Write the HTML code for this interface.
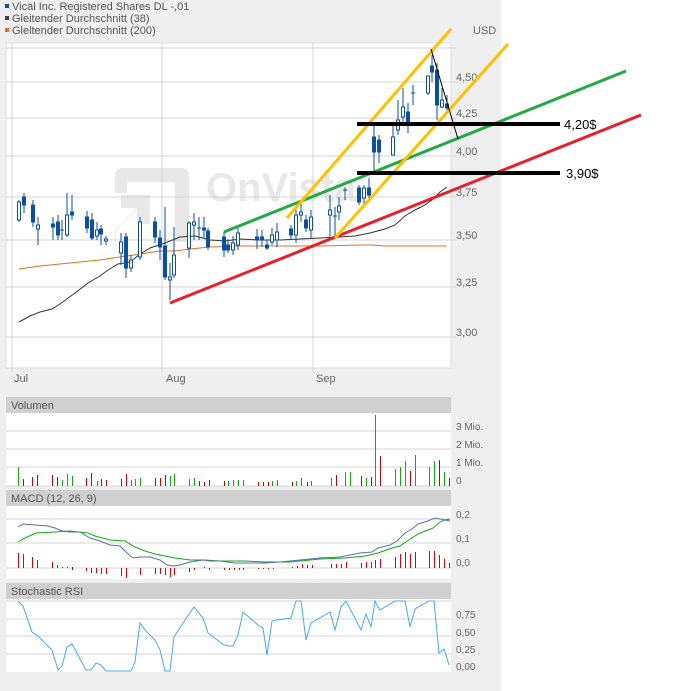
<!DOCTYPE html>
<html><head><meta charset="utf-8"><style>
html,body{margin:0;padding:0;background:#fff;}
svg{display:block;font-family:"Liberation Sans",sans-serif;}
</style></head><body>
<svg width="674" height="691" viewBox="0 0 674 691" xmlns="http://www.w3.org/2000/svg">
<rect x="0" y="0" width="501" height="691" fill="#efefef"/>
<!-- legend -->
<rect x="5" y="4" width="4" height="4" fill="#0b4fa3"/><text x="12" y="10" font-size="11" fill="#555">Vical Inc. Registered Shares DL -,01</text>
<rect x="5" y="16" width="4" height="4" fill="#444"/><text x="12" y="22" font-size="11" fill="#555">Gleitender Durchschnitt (38)</text>
<rect x="5" y="28" width="4" height="4" fill="#e07020"/><text x="12" y="34" font-size="11" fill="#555">Gleitender Durchschnitt (200)</text>
<text x="473" y="34" font-size="11" fill="#666">USD</text>
<!-- main plot -->
<rect x="6" y="43" width="445" height="325" fill="#fff" stroke="#ddd"/>
<!-- watermark -->
<g fill="#e8e8e8">
<path d="M122 168h60a7 7 0 0 1 7 7v67h-14v-60h-48v11h-12v-18a7 7 0 0 1 7-7z"/>
<path d="M115 242v-12l22-22h-16v-13h29v29h-13v-15l-21 21v12z"/>
</g>
<text x="206" y="201" font-size="40" font-weight="bold" fill="#e8e8e8">OnVista</text>
<g stroke="#d4d4d4" stroke-width="1">
<line x1="6" y1="48" x2="456" y2="48"/>
<line x1="6" y1="82" x2="456" y2="82"/><line x1="6" y1="118" x2="456" y2="118"/><line x1="6" y1="156" x2="456" y2="156"/><line x1="6" y1="197" x2="456" y2="197"/><line x1="6" y1="240" x2="456" y2="240"/><line x1="6" y1="287" x2="456" y2="287"/><line x1="6" y1="337" x2="456" y2="337"/>
<line x1="12" y1="43" x2="12" y2="372"/><line x1="162" y1="43" x2="162" y2="372"/><line x1="313" y1="43" x2="313" y2="372"/>
</g>
<g font-size="11" fill="#666">
<text x="456" y="81">4,50</text><text x="456" y="117">4,25</text><text x="456" y="155">4,00</text><text x="456" y="196">3,75</text><text x="456" y="239">3,50</text><text x="456" y="286">3,25</text><text x="456" y="336">3,00</text>
<text x="14" y="382">Jul</text><text x="166" y="382">Aug</text><text x="316" y="382">Sep</text>
</g>
<!-- MAs -->
<polyline fill="none" stroke="#e07020" stroke-width="1" points="19,269 40,266 60,264 80,262 100,260 120,257 140,254 160,251 175,251 190,249 210,247 240,246 280,246 320,246 360,245 372,245 385,246 420,246 447,246"/>
<polyline fill="none" stroke="#333" stroke-width="1" points="19,322 30,316 40,312 52,309 60,304 75,293 88,283 100,276 108,270 118,264 130,262 140,254 150,248 165,243 180,237 195,236 210,240 225,241 240,239 260,240 280,240 300,239 320,238 340,237 355,236 370,233 385,229 395,225 405,216 415,210 425,205 432,200 440,192 447,187"/>
<!-- candles -->
<g stroke="#0b4fa3" stroke-width="1">
<line x1="19" y1="200" x2="19" y2="222"/><rect x="17.5" y="202" width="3" height="18" fill="#fff"/>
<line x1="24" y1="193" x2="24" y2="213"/><rect x="22.5" y="197" width="3" height="8" fill="#0b4fa3"/>
<line x1="33" y1="200" x2="33" y2="227"/><rect x="31.5" y="205" width="3" height="17" fill="#0b4fa3"/>
<line x1="38" y1="217" x2="38" y2="245"/><rect x="36.5" y="225" width="3" height="4" fill="#fff"/>
<line x1="53" y1="217" x2="53" y2="240"/><rect x="51.5" y="224" width="3" height="3" fill="#0b4fa3"/>
<line x1="58" y1="215" x2="58" y2="240"/><rect x="56.5" y="222" width="3" height="13" fill="#0b4fa3"/>
<line x1="62" y1="220" x2="62" y2="240"/><line x1="60" y1="230" x2="64" y2="230"/>
<line x1="67" y1="193" x2="67" y2="237"/><rect x="65.5" y="215" width="3" height="20" fill="#fff"/>
<line x1="72" y1="195" x2="72" y2="220"/><rect x="70.5" y="212" width="3" height="3" fill="#0b4fa3"/>
<line x1="87" y1="211" x2="87" y2="233"/><rect x="85.5" y="217" width="3" height="11" fill="#0b4fa3"/>
<line x1="92" y1="213" x2="92" y2="240"/><rect x="90.5" y="220" width="3" height="18" fill="#0b4fa3"/>
<line x1="97" y1="222" x2="97" y2="240"/><rect x="95.5" y="230" width="3" height="6" fill="#fff"/>
<line x1="101" y1="225" x2="101" y2="245"/><rect x="99.5" y="229" width="3" height="5" fill="#0b4fa3"/>
<line x1="106" y1="236" x2="106" y2="245"/><rect x="104.5" y="239" width="3" height="2" fill="#fff"/>
<line x1="121" y1="233" x2="121" y2="265"/><rect x="119.5" y="242" width="3" height="11" fill="#fff"/>
<line x1="126" y1="233" x2="126" y2="278"/><rect x="124.5" y="237" width="3" height="31" fill="#0b4fa3"/>
<line x1="131" y1="255" x2="131" y2="272"/><rect x="129.5" y="260" width="3" height="8" fill="#fff"/>
<line x1="140" y1="217" x2="140" y2="260"/><rect x="138.5" y="222" width="3" height="35" fill="#fff"/>
<line x1="155" y1="217" x2="155" y2="243"/><rect x="153.5" y="222" width="3" height="15" fill="#0b4fa3"/>
<line x1="160" y1="230" x2="160" y2="260"/><rect x="158.5" y="238" width="3" height="9" fill="#0b4fa3"/>
<line x1="165" y1="207" x2="165" y2="280"/><rect x="163.5" y="246" width="3" height="31" fill="#0b4fa3"/>
<line x1="170" y1="263" x2="170" y2="300"/><rect x="168.5" y="277" width="3" height="3" fill="#fff"/>
<line x1="174" y1="227" x2="174" y2="278"/><rect x="172.5" y="255" width="3" height="20" fill="#fff"/>
<line x1="189" y1="221" x2="189" y2="258"/><rect x="187.5" y="223" width="3" height="25" fill="#fff"/>
<line x1="194" y1="213" x2="194" y2="240"/><rect x="192.5" y="222" width="3" height="3" fill="#fff"/>
<line x1="199" y1="217" x2="199" y2="240"/><line x1="197" y1="228" x2="201" y2="228"/>
<line x1="204" y1="217" x2="204" y2="238"/><rect x="202.5" y="228" width="3" height="2" fill="#0b4fa3"/>
<line x1="208" y1="228" x2="208" y2="250"/><rect x="206.5" y="231" width="3" height="16" fill="#0b4fa3"/>
<line x1="224" y1="232" x2="224" y2="257"/><rect x="222.5" y="237" width="3" height="13" fill="#0b4fa3"/>
<line x1="228" y1="239" x2="228" y2="253"/><rect x="226.5" y="245" width="3" height="5" fill="#0b4fa3"/>
<line x1="233" y1="236" x2="233" y2="255"/><rect x="231.5" y="243" width="3" height="7" fill="#fff"/>
<line x1="238" y1="227" x2="238" y2="250"/><rect x="236.5" y="233" width="3" height="12" fill="#fff"/>
<line x1="257" y1="229" x2="257" y2="249"/><rect x="255.5" y="237" width="3" height="3" fill="#0b4fa3"/>
<line x1="262" y1="230" x2="262" y2="247"/><rect x="260.5" y="237" width="3" height="3" fill="#0b4fa3"/>
<line x1="267" y1="240" x2="267" y2="250"/><rect x="265.5" y="245" width="3" height="3" fill="#0b4fa3"/>
<line x1="272" y1="228" x2="272" y2="245"/><rect x="270.5" y="235" width="3" height="7" fill="#fff"/>
<line x1="277" y1="223" x2="277" y2="247"/><rect x="275.5" y="232" width="3" height="8" fill="#fff"/>
<line x1="291" y1="225" x2="291" y2="240"/><rect x="289.5" y="229" width="3" height="6" fill="#0b4fa3"/>
<line x1="296" y1="210" x2="296" y2="243"/><rect x="294.5" y="215" width="3" height="20" fill="#fff"/>
<line x1="301" y1="202" x2="301" y2="222"/><rect x="299.5" y="212" width="3" height="3" fill="#fff"/>
<line x1="306" y1="215" x2="306" y2="232"/><rect x="304.5" y="220" width="3" height="8" fill="#0b4fa3"/>
<line x1="311" y1="210" x2="311" y2="238"/><rect x="309.5" y="217" width="3" height="13" fill="#fff"/>
<line x1="330" y1="195" x2="330" y2="237"/><rect x="328.5" y="210" width="3" height="5" fill="#fff"/>
<line x1="335" y1="207" x2="335" y2="237"/><line x1="333" y1="216" x2="337" y2="216"/>
<line x1="339" y1="197" x2="339" y2="220"/><rect x="337.5" y="206" width="3" height="6" fill="#fff"/>
<line x1="345" y1="187" x2="345" y2="200"/><line x1="343" y1="190" x2="347" y2="190"/>
<line x1="359" y1="185" x2="359" y2="205"/><rect x="357.5" y="188" width="3" height="14" fill="#0b4fa3"/>
<line x1="364" y1="185" x2="364" y2="205"/><rect x="362.5" y="188" width="3" height="10" fill="#fff"/>
<line x1="369" y1="178" x2="369" y2="200"/><rect x="367.5" y="188" width="3" height="7" fill="#0b4fa3"/>
<line x1="374" y1="122" x2="374" y2="175"/><rect x="372.5" y="137" width="3" height="15" fill="#0b4fa3"/>
<line x1="379" y1="135" x2="379" y2="163"/><rect x="377.5" y="140" width="3" height="12" fill="#0b4fa3"/>
<line x1="393" y1="122" x2="393" y2="155"/><rect x="391.5" y="137" width="3" height="18" fill="#fff"/>
<line x1="398" y1="100" x2="398" y2="135"/><rect x="396.5" y="120" width="3" height="10" fill="#fff"/>
<line x1="403" y1="88" x2="403" y2="123"/><rect x="401.5" y="107" width="3" height="10" fill="#fff"/>
<line x1="408" y1="103" x2="408" y2="133"/><rect x="406.5" y="112" width="3" height="10" fill="#0b4fa3"/>
<line x1="413" y1="85" x2="413" y2="105"/><line x1="411" y1="93" x2="415" y2="93"/>
<line x1="428" y1="76" x2="428" y2="95"/><rect x="426.5" y="76" width="3" height="17" fill="#fff"/>
<line x1="432" y1="55" x2="432" y2="82"/><rect x="430.5" y="66" width="3" height="6" fill="#0b4fa3"/>
<line x1="437" y1="63" x2="437" y2="120"/><rect x="435.5" y="70" width="3" height="35" fill="#0b4fa3"/>
<line x1="442" y1="88" x2="442" y2="108"/><rect x="440.5" y="100" width="3" height="7" fill="#fff"/>
<line x1="447" y1="95" x2="447" y2="113"/><rect x="445.5" y="104" width="3" height="4" fill="#0b4fa3"/>
</g>
<!-- trend lines -->
<line x1="170" y1="303" x2="641" y2="115" stroke="#e8202a" stroke-width="3"/>
<line x1="224" y1="232" x2="626" y2="71" stroke="#22aa44" stroke-width="3"/>
<line x1="287" y1="218" x2="451" y2="29" stroke="#ffc000" stroke-width="3"/>
<line x1="335" y1="238" x2="508" y2="44" stroke="#ffc000" stroke-width="3"/>
<line x1="357" y1="124" x2="560" y2="124" stroke="#000" stroke-width="4"/>
<line x1="357" y1="173" x2="560" y2="173" stroke="#000" stroke-width="4"/>
<line x1="431" y1="49" x2="458" y2="139" stroke="#000" stroke-width="1"/>
<text x="564" y="129" font-size="13" fill="#000">4,20$</text>
<text x="566" y="178" font-size="13" fill="#000">3,90$</text>
<!-- Volume -->
<rect x="6" y="397" width="445" height="16" fill="#d0d0d0"/>
<text x="11" y="409" font-size="11" fill="#555">Volumen</text>
<rect x="6" y="413" width="445" height="73" fill="#fff"/>
<g stroke="#d4d4d4"><line x1="6" y1="431" x2="451" y2="431"/><line x1="6" y1="449" x2="451" y2="449"/><line x1="6" y1="467" x2="451" y2="467"/><line x1="6" y1="486" x2="451" y2="486"/></g>
<g font-size="10" fill="#666"><text x="456" y="430">3 Mio.</text><text x="456" y="448">2 Mio.</text><text x="456" y="466">1 Mio.</text><text x="456" y="484">0</text></g>
<g stroke="#11aa11" stroke-width="1">
<line x1="18.5" y1="467" x2="18.5" y2="486"/><line x1="62.5" y1="480" x2="62.5" y2="486"/><line x1="67.5" y1="474" x2="67.5" y2="486"/><line x1="72.5" y1="476" x2="72.5" y2="486"/><line x1="97.5" y1="481" x2="97.5" y2="486"/><line x1="131.5" y1="480" x2="131.5" y2="486"/><line x1="135.5" y1="479" x2="135.5" y2="486"/><line x1="140.5" y1="478" x2="140.5" y2="486"/><line x1="170.5" y1="476" x2="170.5" y2="486"/><line x1="174.5" y1="474" x2="174.5" y2="486"/><line x1="189.5" y1="479" x2="189.5" y2="486"/><line x1="194.5" y1="478" x2="194.5" y2="486"/><line x1="228.5" y1="481" x2="228.5" y2="486"/><line x1="233.5" y1="480" x2="233.5" y2="486"/><line x1="238.5" y1="480" x2="238.5" y2="486"/><line x1="243.5" y1="480" x2="243.5" y2="486"/><line x1="272.5" y1="481" x2="272.5" y2="486"/><line x1="277.5" y1="480" x2="277.5" y2="486"/><line x1="296.5" y1="481" x2="296.5" y2="486"/><line x1="301.5" y1="478" x2="301.5" y2="486"/><line x1="311.5" y1="481" x2="311.5" y2="486"/><line x1="331.5" y1="478" x2="331.5" y2="486"/><line x1="345.5" y1="472" x2="345.5" y2="486"/><line x1="350.5" y1="472" x2="350.5" y2="486"/><line x1="366.5" y1="478" x2="366.5" y2="486"/><line x1="375.5" y1="415" x2="375.5" y2="486"/><line x1="395.5" y1="469" x2="395.5" y2="486"/><line x1="400.5" y1="467" x2="400.5" y2="486"/><line x1="405.5" y1="461" x2="405.5" y2="486"/><line x1="415.5" y1="455" x2="415.5" y2="486"/><line x1="429.5" y1="467" x2="429.5" y2="486"/><line x1="434.5" y1="461" x2="434.5" y2="486"/><line x1="444.5" y1="472" x2="444.5" y2="486"/>
</g>
<g stroke="#cc0000" stroke-width="1">
<line x1="23.5" y1="479" x2="23.5" y2="486"/><line x1="32.5" y1="477" x2="32.5" y2="486"/><line x1="37.5" y1="475" x2="37.5" y2="486"/><line x1="52.5" y1="475" x2="52.5" y2="486"/><line x1="57.5" y1="477" x2="57.5" y2="486"/><line x1="86.5" y1="478" x2="86.5" y2="486"/><line x1="91.5" y1="473" x2="91.5" y2="486"/><line x1="101.5" y1="479" x2="101.5" y2="486"/><line x1="106.5" y1="480" x2="106.5" y2="486"/><line x1="121.5" y1="479" x2="121.5" y2="486"/><line x1="126.5" y1="474" x2="126.5" y2="486"/><line x1="155.5" y1="478" x2="155.5" y2="486"/><line x1="160.5" y1="478" x2="160.5" y2="486"/><line x1="165.5" y1="475" x2="165.5" y2="486"/><line x1="199.5" y1="481" x2="199.5" y2="486"/><line x1="204.5" y1="482" x2="204.5" y2="486"/><line x1="209.5" y1="480" x2="209.5" y2="486"/><line x1="224.5" y1="481" x2="224.5" y2="486"/><line x1="258.5" y1="482" x2="258.5" y2="486"/><line x1="263.5" y1="482" x2="263.5" y2="486"/><line x1="268.5" y1="482" x2="268.5" y2="486"/><line x1="292.5" y1="482" x2="292.5" y2="486"/><line x1="307.5" y1="482" x2="307.5" y2="486"/><line x1="336.5" y1="475" x2="336.5" y2="486"/><line x1="361.5" y1="476" x2="361.5" y2="486"/><line x1="371.5" y1="477" x2="371.5" y2="486"/><line x1="380.5" y1="456" x2="380.5" y2="486"/><line x1="410.5" y1="471" x2="410.5" y2="486"/><line x1="439.5" y1="460" x2="439.5" y2="486"/><line x1="449.5" y1="478" x2="449.5" y2="486"/>
</g>
<!-- MACD -->
<rect x="6" y="490" width="445" height="16" fill="#d0d0d0"/>
<text x="11" y="502" font-size="11" fill="#555">MACD (12, 26, 9)</text>
<rect x="6" y="506" width="445" height="73" fill="#fff"/>
<g stroke="#d4d4d4"><line x1="6" y1="519" x2="451" y2="519"/><line x1="6" y1="543" x2="451" y2="543"/><line x1="6" y1="568" x2="451" y2="568"/></g>
<g font-size="10" fill="#666"><text x="456" y="518">0,2</text><text x="456" y="542">0,1</text><text x="456" y="566">0,0</text></g>
<g stroke="#dd0000" stroke-width="1">
<line x1="18.5" y1="553" x2="18.5" y2="568"/><line x1="23.5" y1="554" x2="23.5" y2="568"/><line x1="32.5" y1="557" x2="32.5" y2="568"/><line x1="37.5" y1="560" x2="37.5" y2="568"/><line x1="52.5" y1="562" x2="52.5" y2="568"/><line x1="57.5" y1="565" x2="57.5" y2="568"/><line x1="62.5" y1="567" x2="62.5" y2="568"/><line x1="67.5" y1="567" x2="67.5" y2="568"/><line x1="72.5" y1="567" x2="72.5" y2="570"/><line x1="86.5" y1="568" x2="86.5" y2="571"/><line x1="91.5" y1="568" x2="91.5" y2="573"/><line x1="96.5" y1="568" x2="96.5" y2="573"/><line x1="101.5" y1="568" x2="101.5" y2="574"/><line x1="106.5" y1="568" x2="106.5" y2="574"/><line x1="121.5" y1="568" x2="121.5" y2="576"/><line x1="126.5" y1="568" x2="126.5" y2="578"/><line x1="140.5" y1="568" x2="140.5" y2="575"/><line x1="155.5" y1="568" x2="155.5" y2="574"/><line x1="160.5" y1="568" x2="160.5" y2="574"/><line x1="165.5" y1="568" x2="165.5" y2="575"/><line x1="170.5" y1="568" x2="170.5" y2="577"/><line x1="174.5" y1="568" x2="174.5" y2="575"/><line x1="189.5" y1="568" x2="189.5" y2="572"/><line x1="194.5" y1="568" x2="194.5" y2="570"/><line x1="204.5" y1="567" x2="204.5" y2="568"/><line x1="209.5" y1="568" x2="209.5" y2="570"/><line x1="224.5" y1="568" x2="224.5" y2="570"/><line x1="229.5" y1="568" x2="229.5" y2="570"/><line x1="234.5" y1="568" x2="234.5" y2="570"/><line x1="239.5" y1="568" x2="239.5" y2="570"/><line x1="243.5" y1="568" x2="243.5" y2="570"/><line x1="258.5" y1="568" x2="258.5" y2="569"/><line x1="263.5" y1="568" x2="263.5" y2="569"/><line x1="268.5" y1="568" x2="268.5" y2="569"/><line x1="273.5" y1="568" x2="273.5" y2="569"/><line x1="292.5" y1="567" x2="292.5" y2="568"/><line x1="297.5" y1="566" x2="297.5" y2="568"/><line x1="302.5" y1="564" x2="302.5" y2="568"/><line x1="307.5" y1="565" x2="307.5" y2="568"/><line x1="312.5" y1="565" x2="312.5" y2="568"/><line x1="331.5" y1="564" x2="331.5" y2="568"/><line x1="336.5" y1="564" x2="336.5" y2="568"/><line x1="341.5" y1="564" x2="341.5" y2="568"/><line x1="346.5" y1="562" x2="346.5" y2="568"/><line x1="361.5" y1="563" x2="361.5" y2="568"/><line x1="366.5" y1="562" x2="366.5" y2="568"/><line x1="371.5" y1="562" x2="371.5" y2="568"/><line x1="375.5" y1="560" x2="375.5" y2="568"/><line x1="380.5" y1="559" x2="380.5" y2="568"/><line x1="395.5" y1="557" x2="395.5" y2="568"/><line x1="400.5" y1="554" x2="400.5" y2="568"/><line x1="405.5" y1="552" x2="405.5" y2="568"/><line x1="410.5" y1="554" x2="410.5" y2="568"/><line x1="415.5" y1="552" x2="415.5" y2="568"/><line x1="429.5" y1="551" x2="429.5" y2="568"/><line x1="434.5" y1="551" x2="434.5" y2="568"/><line x1="439.5" y1="555" x2="439.5" y2="568"/><line x1="444.5" y1="559" x2="444.5" y2="568"/><line x1="449.5" y1="563" x2="449.5" y2="568"/>
</g>
<polyline fill="none" stroke="#11aa11" stroke-width="1" points="18,542 25,538 36,533 55,532 70,531 88,533 95,536 110,540 125,541 135,547 145,551 155,554 165,556 175,558 190,560 205,560 220,561 245,561 265,562 290,562 300,561 310,560 320,559 345,558 365,556 378,553 392,548 400,546 410,539 420,533 428,530 433,528 440,522 445,520 450,519"/>
<polyline fill="none" stroke="#5570b0" stroke-width="1" points="18,527 23,524 35,525 48,526 55,528 62,531 70,532 80,532 90,538 100,541 110,545 120,546 127,553 133,558 140,557 150,557 160,560 167,565 173,566 180,565 190,562 203,560 210,561 220,561 235,563 245,563 265,563 280,562 300,560 310,559 320,558 340,557 345,556 360,553 372,552 378,548 390,545 397,541 405,533 412,529 418,524 428,521 435,518 440,519 450,521"/>
<!-- Stochastic RSI -->
<rect x="6" y="583" width="445" height="16" fill="#d0d0d0"/>
<text x="11" y="595" font-size="11" fill="#555">Stochastic RSI</text>
<rect x="6" y="599" width="445" height="73" fill="#fff"/>
<g stroke="#d4d4d4"><line x1="6" y1="601" x2="451" y2="601"/><line x1="6" y1="619" x2="451" y2="619"/><line x1="6" y1="636" x2="451" y2="636"/><line x1="6" y1="654" x2="451" y2="654"/></g>
<g font-size="10" fill="#666"><text x="456" y="618">0,75</text><text x="456" y="636">0,50</text><text x="456" y="653">0,25</text><text x="456" y="670">0,00</text></g>
<polyline fill="none" stroke="#44aaee" stroke-width="1" points="18,601 23,606 32,632 38,636 52,650 58,670 62,666 67,647 72,644 86,670 91,670 96,663 101,665 106,671 131,671 135,662 140,623 145,630 155,640 160,650 165,671 170,671 174,637 189,614 194,607 203,618 208,633 224,645 228,646 233,646 238,635 243,612 258,625 263,628 267,655 272,621 277,620 291,618 296,601 301,601 306,640 311,623 330,612 335,630 341,607 346,601 361,630 366,614 371,627 375,601 380,610 395,601 405,601 410,627 415,609 429,601 434,601 439,653 444,649 449,665"/>
</svg>
</body></html>
